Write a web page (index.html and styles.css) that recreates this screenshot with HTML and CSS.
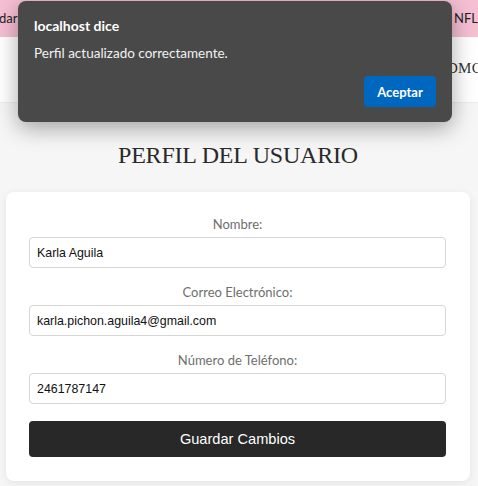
FILE: index.html
```html
<!DOCTYPE html>
<html lang="es">
<head>
<meta charset="utf-8">
<title>Perfil</title>
<link rel="stylesheet" href="styles.css">
</head>
<body>
<header class="topbar">
  <span class="top-left">dar</span>
  <span class="top-right">NFL</span>
</header>
<nav class="navbar">
  <span class="nav-item">DMC</span>
</nav>
<main class="page">
  <h1 class="title">PERFIL DEL USUARIO</h1>
  <form class="card">
    <div class="field">
      <label class="label">Nombre:</label>
      <input class="input" type="text" value="Karla Aguila">
    </div>
    <div class="field">
      <label class="label">Correo Electrónico:</label>
      <input class="input" type="text" value="karla.pichon.aguila4@gmail.com">
    </div>
    <div class="field">
      <label class="label">Número de Teléfono:</label>
      <input class="input" type="text" value="2461787147">
    </div>
    <button class="save" type="button">Guardar Cambios</button>
  </form>
</main>
<div class="dialog">
  <div class="dialog-title">localhost dice</div>
  <div class="dialog-msg">Perfil actualizado correctamente.</div>
  <div class="dialog-actions"><button class="accept" type="button">Aceptar</button></div>
</div>
</body>
</html>
```
FILE: styles.css
```css
* { box-sizing: border-box; }
html, body { margin: 0; padding: 0; }
body {
  background: #f6f6f6;
  width: 478px;
  height: 486px;
  overflow: hidden;
  position: relative;
  font-family: "Liberation Sans", Arial, sans-serif;
}
.topbar {
  height: 37px;
  background: #f6bfd3;
  display: flex;
  justify-content: space-between;
  align-items: center;
  overflow: hidden;
  font-family: "Lato", "Open Sans", sans-serif;
  font-size: 13px;
  color: #222;
  padding-bottom: 2px;
}
.top-left { margin-left: -1px; }
.top-right { margin-right: 0; }
.navbar {
  height: 66px;
  background: #ffffff;
  display: flex;
  justify-content: flex-end;
  align-items: center;
  overflow: hidden;
  border-bottom: 1px solid #ececec;
  padding-bottom: 2px;
}
.nav-item {
  font-family: "Liberation Serif", serif;
  font-size: 15px;
  color: #333;
  margin-right: -4px;
  letter-spacing: 0.3px;
}
.page {
  padding: 0 8px 0 6px;
}
.title {
  margin: 38px 0 23px;
  text-align: center;
  font-family: "Liberation Serif", "DejaVu Serif", serif;
  font-weight: normal;
  font-size: 24px;
  line-height: 28px;
  letter-spacing: -0.2px;
  color: #2a2a2a;
}
.card {
  background: #ffffff;
  border-radius: 8px;
  box-shadow: 0 2px 8px rgba(0,0,0,0.08);
  padding: 23px 24px 24px 23px;
  display: flex;
  flex-direction: column;
  gap: 15px;
}
.field {
  display: flex;
  flex-direction: column;
  gap: 4px;
}
.label {
  text-align: center;
  font-family: "Lato", "Open Sans", sans-serif;
  font-size: 13px;
  line-height: 18px;
  color: #6e6e6e;
}
.input {
  height: 31px;
  border: 1px solid #d6d6d6;
  border-radius: 4px;
  padding: 0 7px;
  font-family: "Liberation Sans", Arial, sans-serif;
  font-size: 12.4px;
  color: #111;
  background: #fff;
}
.save {
  margin-top: 2px;
  height: 36px;
  border: none;
  border-radius: 4px;
  background: #282828;
  color: #fff;
  font-family: "Liberation Sans", Arial, sans-serif;
  font-size: 14.6px;
}
.dialog {
  position: absolute;
  top: 1px;
  left: 18px;
  width: 434px;
  height: 121px;
  background: #494949;
  border-radius: 8px;
  box-shadow: 0 6px 22px rgba(0,0,0,0.35);
  padding: 16px 16px 15px 16px;
  display: flex;
  flex-direction: column;
  font-family: "Lato", "Open Sans", sans-serif;
  color: #fff;
}
.dialog-title {
  font-weight: bold;
  font-size: 14px;
  line-height: 18px;
}
.dialog-msg {
  margin-top: 9px;
  font-size: 13.5px;
  line-height: 18px;
  color: #f2f2f2;
}
.dialog-actions {
  margin-top: auto;
  display: flex;
  justify-content: flex-end;
}
.accept {
  width: 72px;
  height: 31px;
  border: none;
  border-radius: 4px;
  background: #0067c0;
  color: #fff;
  font-family: "Lato", "Open Sans", sans-serif;
  font-weight: bold;
  font-size: 13px;
}
```
